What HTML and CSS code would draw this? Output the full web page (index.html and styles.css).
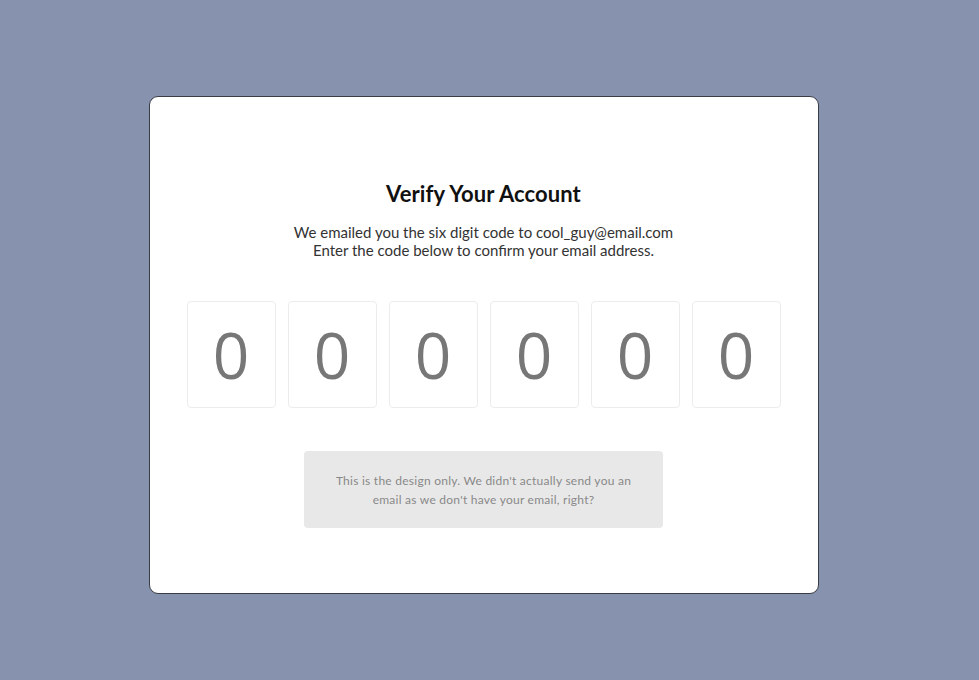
FILE: index.html
```html
<!DOCTYPE html>
<html>
<head>
<meta charset="utf-8">
<link rel="stylesheet" href="styles.css">
</head>
<body>
<div class="card">
  <h1 class="title">Verify Your Account</h1>
  <p class="sub">We emailed you the six digit code to cool_guy@email.com<br>Enter the code below to confirm your email address.</p>
  <div class="digits">
    <div class="digit">0</div>
    <div class="digit">0</div>
    <div class="digit">0</div>
    <div class="digit">0</div>
    <div class="digit">0</div>
    <div class="digit">0</div>
  </div>
  <div class="note">This is the design only. We didn't actually send you an<br>email as we don't have your email, right?</div>
</div>
</body>
</html>
```

FILE: styles.css
```css
html, body {
  margin: 0;
  padding: 0;
}
body {
  background: #8793ae;
  font-family: "Lato", "Open Sans", sans-serif;
  display: flex;
  justify-content: center;
  align-items: flex-start;
  padding-top: 96px;
  padding-right: 12px;
  height: 680px;
  box-sizing: border-box;
}
.card {
  width: 670px;
  height: 498px;
  box-sizing: border-box;
  background: #fff;
  border: 1px solid #3a3d45;
  border-radius: 9px;
  display: flex;
  flex-direction: column;
  align-items: center;
  padding-top: 83px;
}
.title {
  margin: 0;
  font-size: 22px;
  font-weight: 700;
  color: #111;
  line-height: 28px;
  letter-spacing: 0.1px;
}
.sub {
  margin: 15px 0 0;
  font-size: 15px;
  line-height: 18px;
  color: #333;
  text-align: center;
}
.digits {
  display: flex;
  gap: 12px;
  margin-top: 42px;
}
.digit {
  width: 89px;
  height: 107px;
  box-sizing: border-box;
  border: 1px solid #ececec;
  border-radius: 4px;
  display: flex;
  align-items: center;
  justify-content: center;
  font-family: "Open Sans", sans-serif;
  font-size: 64px;
  color: #777;
  line-height: 1;
}
.note {
  margin-top: 43px;
  width: 359px;
  height: 77px;
  box-sizing: border-box;
  background: #e8e8e8;
  border-radius: 4px;
  font-size: 12px;
  letter-spacing: 0.25px;
  line-height: 19px;
  color: #888;
  text-align: center;
  display: flex;
  align-items: center;
  justify-content: center;
}
```
